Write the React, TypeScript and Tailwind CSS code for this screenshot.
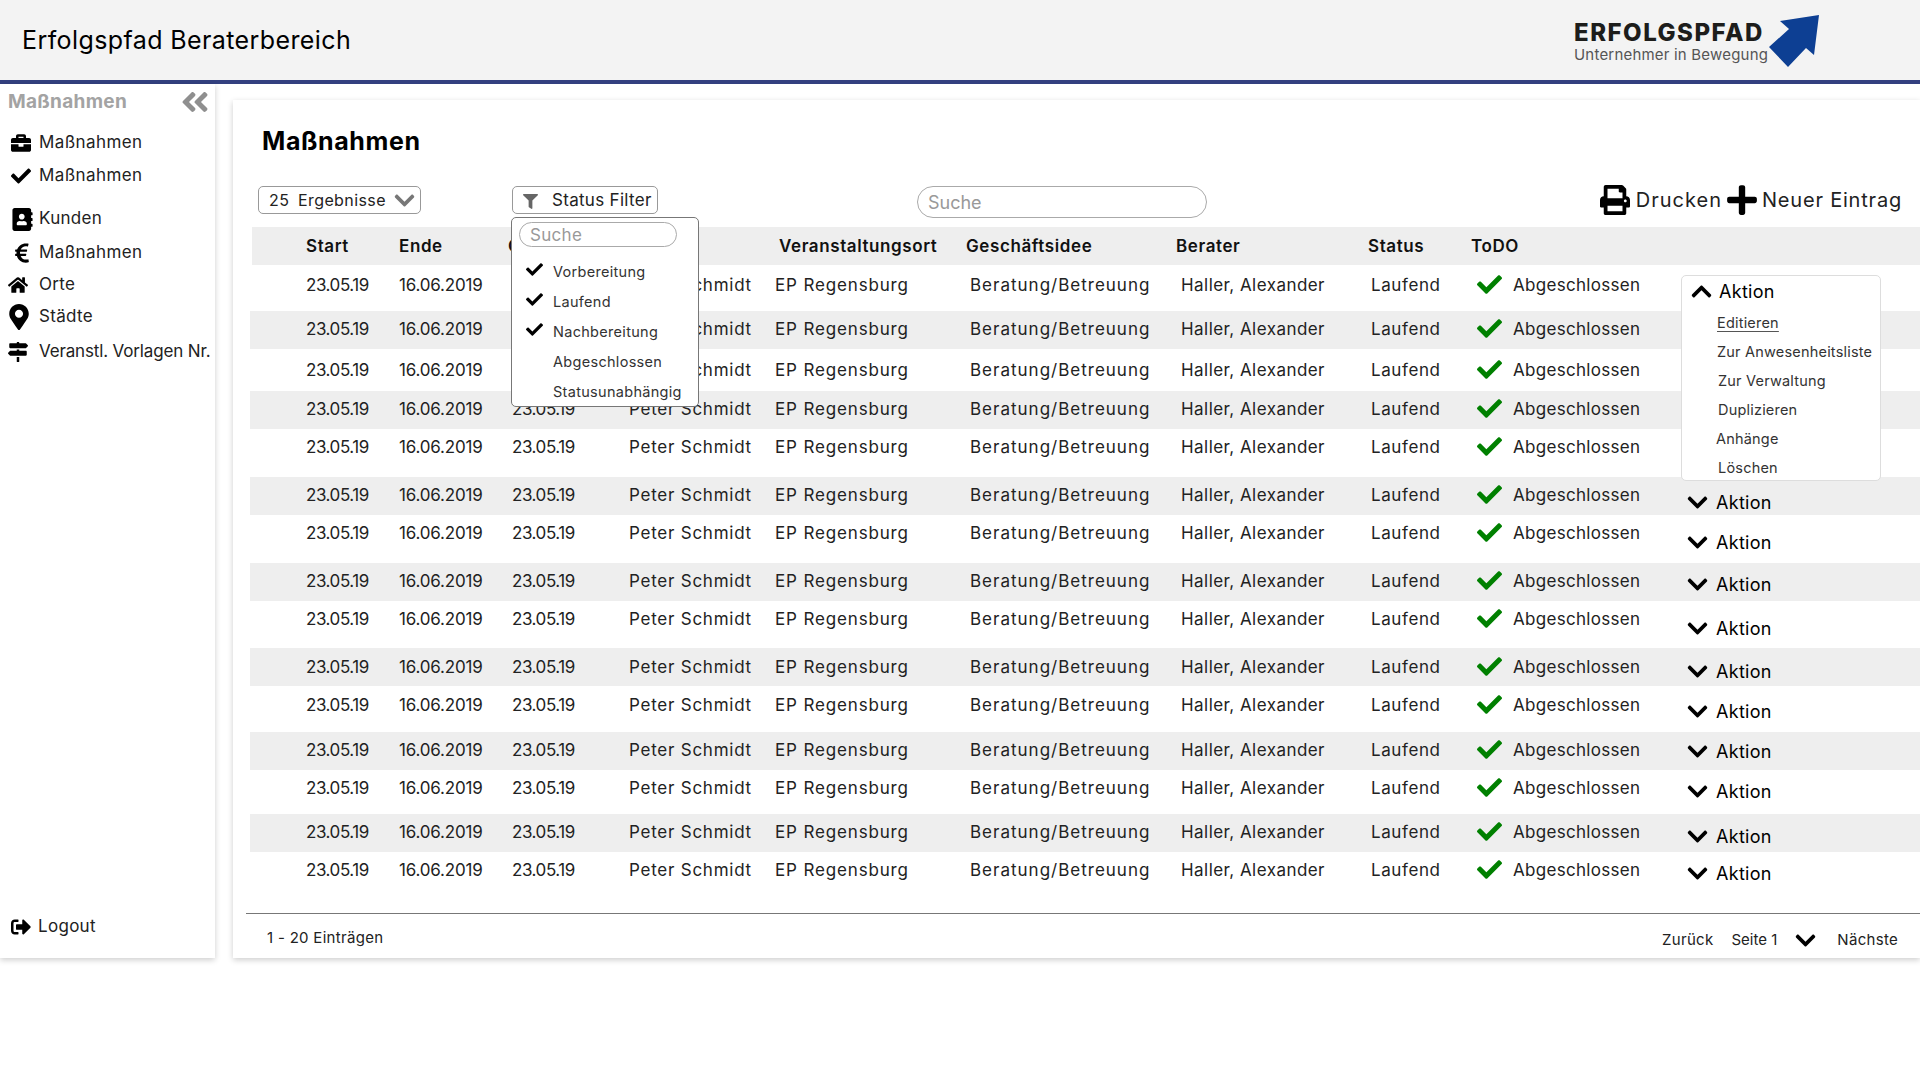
import {
  FaAddressBook,
  FaAngleDoubleLeft,
  FaBriefcase,
  FaCheck,
  FaChevronDown,
  FaChevronUp,
  FaEuroSign,
  FaFilter,
  FaHome,
  FaMapMarkerAlt,
  FaMapSigns,
  FaPlus,
  FaPrint,
  FaSignOutAlt,
} from "react-icons/fa";

const font = { fontFamily: "Inter, 'Noto Sans', sans-serif" };

const sideItems = [
  { label: "Maßnahmen", icon: <FaBriefcase size={20} />, cls: "mt-[7px] tracking-[0.4px]", iconCls: "pl-[11px] w-[39px]" },
  { label: "Maßnahmen", icon: <FaCheck size={20} />, cls: "mt-[1px] tracking-[0.4px]", iconCls: "pl-[11px] w-[39px]" },
  { label: "Kunden", icon: <FaAddressBook size={23} />, cls: "mt-[11px] tracking-[0.3px]", iconCls: "pl-[11px] w-[39px]" },
  { label: "Maßnahmen", icon: <FaEuroSign size={22} />, cls: "mt-[2px] tracking-[0.4px]", iconCls: "pl-[11px] w-[39px]" },
  { label: "Orte", icon: <FaHome size={20} />, cls: "tracking-[0.3px]", iconCls: "pl-[8px] w-[39px]" },
  { label: "Städte", icon: <FaMapMarkerAlt size={26} />, cls: "tracking-[0.3px]", iconCls: "pl-[6px] w-[39px]" },
  { label: "Veranstl. Vorlagen Nr.", icon: <FaMapSigns size={20} />, cls: "mt-[3px] tracking-[-0.15px]", iconCls: "pl-[8px] w-[39px]" },
];

// row height and the odd offset of the action cell, taken from the screenshot
const rows = [
  { cls: "h-[46px] pt-[2px]", aktion: "" },
  { cls: "h-[38px] bg-[#eeeeee]", aktion: "" },
  { cls: "h-[42px] pt-[3px]", aktion: "" },
  { cls: "h-[38px] bg-[#eeeeee]", aktion: "" },
  { cls: "h-[48px]", aktion: "" },
  { cls: "h-[38px] bg-[#eeeeee]", aktion: "mt-[6px]" },
  { cls: "h-[48px]", aktion: "mt-[8px]" },
  { cls: "h-[38px] bg-[#eeeeee]", aktion: "mt-[2px]" },
  { cls: "h-[47px]", aktion: "mt-[8px]" },
  { cls: "h-[38px] bg-[#eeeeee] pt-[1px]", aktion: "mt-[3px]" },
  { cls: "h-[46px] pt-[1px]", aktion: "mt-[5px]" },
  { cls: "h-[38px] bg-[#eeeeee]", aktion: "mt-[0px]" },
  { cls: "h-[44px]", aktion: "mt-[2px]" },
  { cls: "h-[38px] bg-[#eeeeee]", aktion: "mt-[3px]" },
  { cls: "h-[61px]", aktion: "mt-[2px]" },
];

const rowCols = "grid grid-cols-[93px_113px_117px_146px_195px_211px_190px_106px_210px_1fr] items-start pl-[56px] ml-[17px]";

function Cell({ cls, children }: { cls: string; children: React.ReactNode }) {
  return <div className={`h-[38px] flex items-center whitespace-nowrap ${cls}`}>{children}</div>;
}

function Row({ cls, aktion, open }: { cls: string; aktion: string; open: boolean }) {
  return (
    <div className={`${rowCols} ${cls}`}>
      <Cell cls="tracking-[-0.45px]">23.05.19</Cell>
      <Cell cls="tracking-[-0.2px]">16.06.2019</Cell>
      <Cell cls="tracking-[-0.45px]">23.05.19</Cell>
      <Cell cls="tracking-[0.76px]">Peter Schmidt</Cell>
      <Cell cls="tracking-[0.85px]">EP Regensburg</Cell>
      <Cell cls="tracking-[1px]">Beratung/Betreuung</Cell>
      <Cell cls="tracking-[0.45px]">Haller, Alexander</Cell>
      <Cell cls="tracking-[0.6px]">Laufend</Cell>
      <Cell cls="tracking-[0.3px]">
        <FaCheck size={25} className="text-[#008000] mr-[11px] -mt-[4px]" />
        Abgeschlossen
      </Cell>
      {!open && (
        <div className={`h-[38px] flex items-center text-[18px] text-black tracking-[0.3px] -ml-[1px] ${aktion}`}>
          <FaChevronDown size={23} className="mr-[7px]" />
          Aktion
        </div>
      )}
    </div>
  );
}

function StatusDropdown() {
  const items = [
    { label: "Vorbereitung", checked: true },
    { label: "Laufend", checked: true },
    { label: "Nachbereitung", checked: true },
    { label: "Abgeschlossen", checked: false },
    { label: "Statusunabhängig", checked: false },
  ];
  return (
    <div className="absolute left-[278px] top-[117px] w-[188px] h-[190px] bg-white border border-[#777777] rounded-[5px] z-10">
      <div className="ml-[7px] mt-[4px] w-[158px] h-[25px] rounded-full border border-[#aaaaaa] pl-[10px] flex items-center text-[17px] tracking-[0.3px] text-[#999999] pt-[2px]">
        Suche
      </div>
      <div className="mt-[10px]">
        {items.map((it) => (
          <div key={it.label} className="h-[30px] flex items-center pl-[14px] text-[14.5px] text-[#333333] tracking-[0.3px]">
            <span className="w-[27px]">{it.checked && <FaCheck size={17} className="text-black -mt-[5px]" />}</span>
            {it.label}
          </div>
        ))}
      </div>
    </div>
  );
}

function AktionDropdown() {
  const items = [
    { label: "Editieren", cls: "ml-[35px] underline underline-offset-[3px] decoration-[#555555]" },
    { label: "Zur Anwesenheitsliste", cls: "ml-[35px]" },
    { label: "Zur Verwaltung", cls: "ml-[36px]" },
    { label: "Duplizieren", cls: "ml-[36px]" },
    { label: "Anhänge", cls: "ml-[34px]" },
    { label: "Löschen", cls: "ml-[36px]" },
  ];
  return (
    <div className="absolute left-[1448px] top-[175px] w-[200px] h-[206px] bg-white border border-[#dddddd] rounded-[5px] z-10">
      <div className="h-[30px] flex items-center text-[18px] text-black pl-[8px] tracking-[0.3px]">
        <FaChevronUp size={23} className="mr-[6px]" />
        Aktion
      </div>
      <div className="mt-[2px]">
        {items.map((it) => (
          <div key={it.label} className={`h-[29px] flex items-center text-[14.5px] text-[#333333] tracking-[0.2px] whitespace-nowrap ${it.cls}`}>
            {it.label}
          </div>
        ))}
      </div>
    </div>
  );
}

export default function App() {
  return (
    <div className="h-screen overflow-hidden bg-white text-[#222222]" style={font}>
      <header className="h-[84px] bg-[#f3f3f3] border-b-4 border-[#33407f] flex items-center justify-between">
        <h1 className="ml-[22px] text-[25px] font-normal text-black tracking-[0.4px] pt-[1px]">Erfolgspfad Beraterbereich</h1>
        <div className="relative mr-[98px] w-[248px] h-[60px]">
          <div className="absolute left-0 top-[10px] text-[24px] leading-[26px] font-extrabold text-[#1d1d1b] tracking-[1.5px]">ERFOLGSPFAD</div>
          <div className="absolute left-0 top-[36px] text-[15px] leading-[18px] text-[#555555] tracking-[0.2px] whitespace-nowrap">Unternehmer in Bewegung</div>
          <svg className="absolute left-[195px] top-[5px]" width="51" height="53" viewBox="1769 15 51 53">
            <polygon points="1780,21 1819,15 1814,55 1806,48 1788,67 1769,47 1789,29" fill="#0d3f93" />
          </svg>
        </div>
      </header>

      <div className="flex items-start">
        <aside className="w-[215px] h-[874px] shrink-0 bg-white shadow-[0_2px_6px_rgba(0,0,0,0.2)] flex flex-col text-[17px]">
          <div className="h-[36px] flex items-center justify-between pl-[8px] pr-[4px]">
            <span className="text-[19px] font-bold text-[#a3a3a3] tracking-[0.3px]">Maßnahmen</span>
            <FaAngleDoubleLeft size={32} className="text-[#8f8f8f]" />
          </div>
          {sideItems.map((item, i) => (
            <div key={i} className={`h-[32px] flex items-center whitespace-nowrap ${item.cls}`}>
              <span className={`shrink-0 text-black ${item.iconCls}`}>{item.icon}</span>
              {item.label}
            </div>
          ))}
          <div className="mt-auto mb-[15px] h-[32px] flex items-center tracking-[0.3px]">
            <span className="shrink-0 text-black pl-[11px] w-[38px]"><FaSignOutAlt size={20} /></span>
            Logout
          </div>
        </aside>

        <main className="relative ml-[18px] mt-[16px] flex-1 h-[858px] bg-white shadow-[0_2px_6px_rgba(0,0,0,0.2)] flex flex-col text-[17px]">
          <h2 className="ml-[29px] mt-[25px] h-[34px] flex items-center text-[25px] font-bold text-black tracking-[0.6px]">Maßnahmen</h2>

          <div className="flex items-start mt-[27px] h-[41px]">
            <div className="ml-[25px] w-[163px] h-[28px] border border-[#999999] rounded-[5px] flex items-center pl-[10px] text-[16px] tracking-[0.4px]">
              <span className="w-[29px]">25</span>
              <span>Ergebnisse</span>
              <FaChevronDown size={23} className="ml-auto mr-[4px] text-[#777777]" />
            </div>
            <div className="ml-[91px] w-[146px] h-[28px] border border-[#999999] rounded-[5px] flex items-center pl-[10px] tracking-[0.3px] pt-[1px]">
              <FaFilter size={15} className="text-[#666666] mr-[14px] mt-[2px]" />
              Status Filter
            </div>
            <div className="ml-[259px] w-[290px] h-[32px] border border-[#aaaaaa] rounded-full flex items-center pl-[10px] text-[18px] text-[#999999]">
              Suche
            </div>
            <div className="ml-auto mr-[18px] flex items-center text-[20px] -mt-[3px]">
              <FaPrint size={30} className="text-black mr-[6px]" />
              <span className="tracking-[1px]">Drucken</span>
              <FaPlus size={34} className="text-black ml-[3px] mr-[3px]" />
              <span className="tracking-[0.8px]">Neuer Eintrag</span>
            </div>
          </div>

          <div className="ml-[19px] h-[38px] bg-[#eeeeee] grid grid-cols-[93px_109px_117px_154px_187px_210px_192px_103px_1fr] items-center pl-[54px] pt-[1px] font-semibold text-[17px] text-[#111111] whitespace-nowrap tracking-[0.6px]">
            <span>Start</span>
            <span>Ende</span>
            <span>Gestartet</span>
            <span>Berater</span>
            <span>Veranstaltungsort</span>
            <span>Geschäftsidee</span>
            <span>Berater</span>
            <span>Status</span>
            <span>ToDO</span>
          </div>

          <div>
            {rows.map((r, i) => (
              <Row key={i} cls={r.cls} aktion={r.aktion} open={i < 5} />
            ))}
          </div>

          <div className="ml-[13px] border-t border-[#777777] flex-1 flex items-start justify-between text-[15px] tracking-[0.3px]">
            <span className="ml-[21px] mt-[13px]">1 - 20 Einträgen</span>
            <div className="flex items-center mt-[15px] mr-[22px]">
              <span>Zurück</span>
              <span className="ml-[18px] tracking-[0px]">Seite 1</span>
              <FaChevronDown size={23} className="ml-[17px] text-black" />
              <span className="ml-[20px]">Nächste</span>
            </div>
          </div>

          <StatusDropdown />
          <AktionDropdown />
        </main>
      </div>
    </div>
  );
}
